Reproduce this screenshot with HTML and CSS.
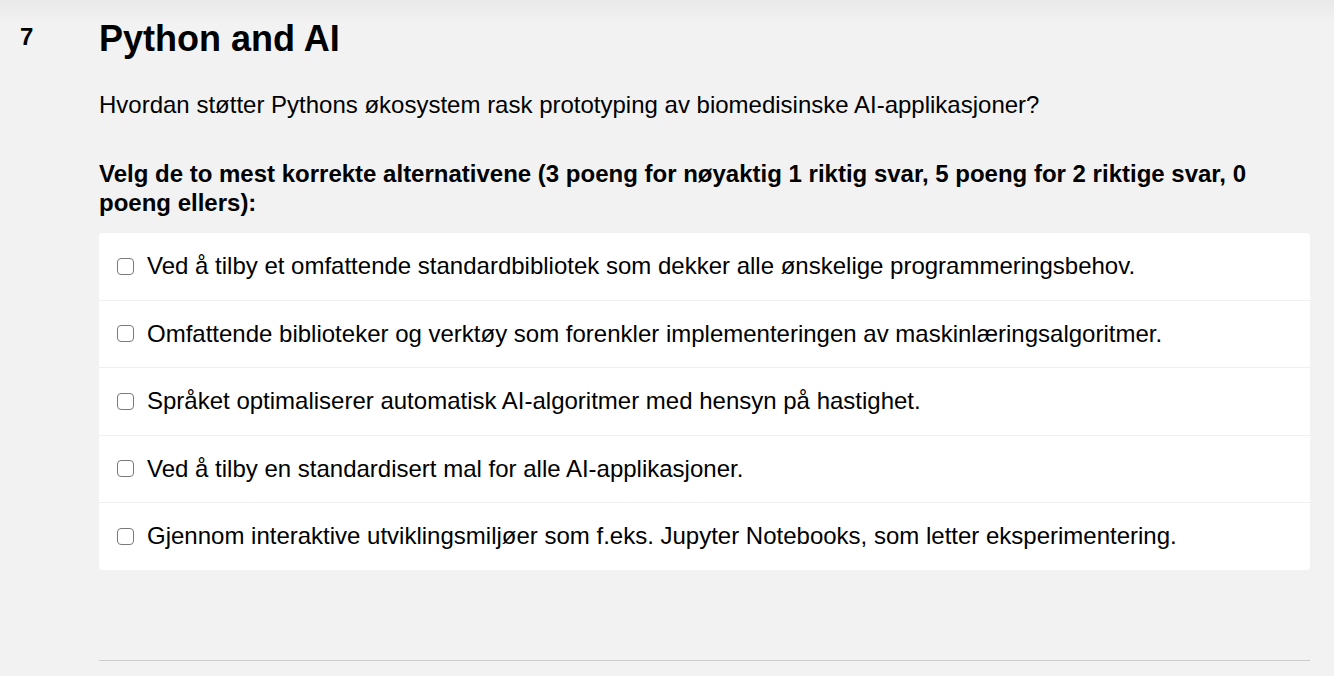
FILE: index.html
```html
<!DOCTYPE html>
<html lang="no">
<head>
<meta charset="utf-8">
<title>Python and AI</title>
<link rel="stylesheet" href="styles.css">
</head>
<body>
<div class="page">
  <div class="num">7</div>
  <div class="main">
    <h1 class="title">Python and AI</h1>
    <p class="question">Hvordan støtter Pythons økosystem rask prototyping av biomedisinske AI-applikasjoner?</p>
    <p class="instr">Velg de to mest korrekte alternativene (3 poeng for nøyaktig 1 riktig svar, 5 poeng for 2 riktige svar, 0 poeng ellers):</p>
    <div class="card">
      <label class="opt"><input type="checkbox" class="cb"><span>Ved å tilby et omfattende standardbibliotek som dekker alle ønskelige programmeringsbehov.</span></label>
      <label class="opt"><input type="checkbox" class="cb"><span>Omfattende biblioteker og verktøy som forenkler implementeringen av maskinlæringsalgoritmer.</span></label>
      <label class="opt"><input type="checkbox" class="cb"><span>Språket optimaliserer automatisk AI-algoritmer med hensyn på hastighet.</span></label>
      <label class="opt"><input type="checkbox" class="cb"><span>Ved å tilby en standardisert mal for alle AI-applikasjoner.</span></label>
      <label class="opt"><input type="checkbox" class="cb"><span>Gjennom interaktive utviklingsmiljøer som f.eks. Jupyter Notebooks, som letter eksperimentering.</span></label>
    </div>
    <hr class="rule">
  </div>
</div>
</body>
</html>
```
FILE: styles.css
```css
html, body {
  margin: 0;
  padding: 0;
}
body {
  background: linear-gradient(#e9e9e9 0px, #f2f2f2 24px, #f2f2f2 100%);
  font-family: "Liberation Sans", Arial, sans-serif;
  color: #000;
  min-height: 676px;
}
.page {
  display: flex;
  padding: 0 24px 0 20px;
}
.num {
  width: 79px;
  flex: none;
  font-weight: bold;
  font-size: 24px;
  padding-top: 23px;
  line-height: 28px;
}
.main {
  flex: 1;
  min-width: 0;
}
.title {
  margin: 0;
  padding-top: 18px;
  font-size: 36px;
  line-height: 41px;
  font-weight: bold;
}
.question {
  margin: 0;
  padding-top: 32px;
  font-size: 24px;
  line-height: 28px;
}
.instr {
  margin: 0;
  padding-top: 40px;
  font-size: 24px;
  line-height: 29px;
  font-weight: bold;
}
.card {
  margin-top: 16px;
  background: #fff;
  border-radius: 4px;
  display: flex;
  flex-direction: column;
}
.opt {
  display: flex;
  align-items: center;
  gap: 13px;
  padding: 20px 18px;
  font-size: 24px;
  line-height: 26.5px;
  border-bottom: 1px solid #efefef;
}
.opt:last-child {
  border-bottom: none;
}
.cb {
  appearance: none;
  -webkit-appearance: none;
  box-sizing: border-box;
  margin: 0;
  width: 17px;
  height: 17px;
  border: 1px solid #7a7a7a;
  border-radius: 4px;
  background: #fff;
  flex: none;
}
.rule {
  margin: 90px 0 0 0;
  border: none;
  border-top: 1px solid #cccccc;
  height: 0;
}
```
